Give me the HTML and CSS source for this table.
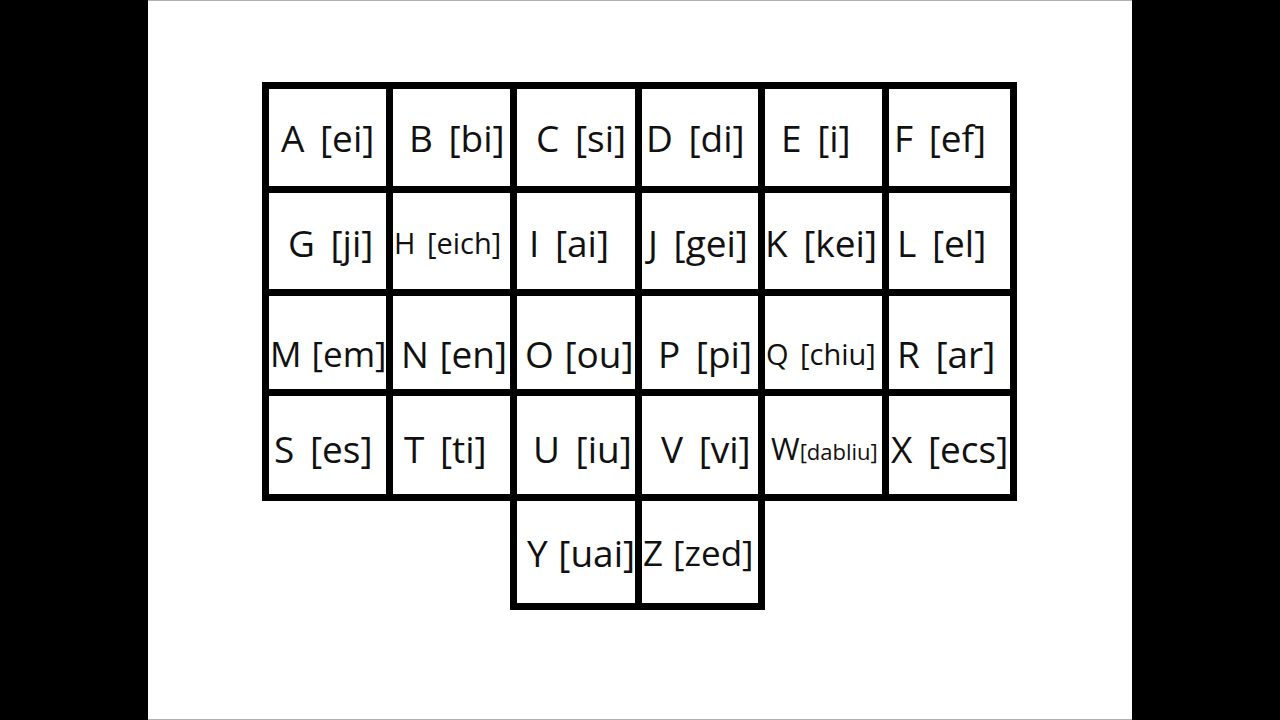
FILE: index.html
```html
<!DOCTYPE html>
<html>
<head>
<meta charset="utf-8">
<link rel="stylesheet" href="styles.css">
</head>
<body>
<div class="slide">
  <div class="chart">
    <div class="grid">
      <div class="cell r1 p12">A [ei]</div>
      <div class="cell r1 p16">B [bi]</div>
      <div class="cell r1 p19">C [si]</div>
      <div class="cell r1 p4">D [di]</div>
      <div class="cell r1 p16">E [i]</div>
      <div class="cell r1 p5">F [ef]</div>

      <div class="cell r2 p19">G [ji]</div>
      <div class="cell r2 p1 small">H [eich]</div>
      <div class="cell r2 p12">I [ai]</div>
      <div class="cell r2 p6">J [gei]</div>
      <div class="cell r2 p0">K [kei]</div>
      <div class="cell r2 p8">L [el]</div>

      <div class="cell r3 p1 tight fit">M [em]</div>
      <div class="cell r3 p8 tight">N [en]</div>
      <div class="cell r3 p8 tight">O [ou]</div>
      <div class="cell r3 p16">P [pi]</div>
      <div class="cell r3 p1 small">Q [chiu]</div>
      <div class="cell r3 p8">R [ar]</div>

      <div class="cell r4 p5">S [es]</div>
      <div class="cell r4 p11">T [ti]</div>
      <div class="cell r4 p16">U [iu]</div>
      <div class="cell r4 p19">V [vi]</div>
      <div class="cell r4 p6 w-cell">W<span class="tiny">[dabliu]</span></div>
      <div class="cell r4 p2">X [ecs]</div>
    </div>
    <div class="tail">
      <div class="cell r5 p10 tight">Y [uai]</div>
      <div class="cell r5 p1 tight fit">Z [zed]</div>
    </div>
  </div>
</div>
</body>
</html>
```
FILE: styles.css
```css
html, body {
  margin: 0;
  padding: 0;
  background: #000;
}

body {
  display: flex;
  justify-content: center;
  height: 720px;
  overflow: hidden;
}

.slide {
  width: 984px;
  height: 720px;
  background: #fff;
  box-sizing: border-box;
  border-top: 1px solid #b0b0b0;
  border-bottom: 1px solid #b0b0b0;
}

.chart {
  margin-top: 81px;
  margin-left: 114px;
  font-family: "Open Sans", "Noto Sans", sans-serif;
  color: #111;
}

.grid {
  display: grid;
  grid-template-columns: 117px 117px 118px 116px 117px 121px;
  grid-template-rows: 97px 96px 93px 98px;
  gap: 7px;
  padding: 7px;
  background: #000;
  width: fit-content;
}

.tail {
  display: grid;
  grid-template-columns: 118px 116px;
  grid-template-rows: 102px;
  gap: 7px;
  padding: 0 7px 7px 7px;
  margin-left: 248px;
  background: #000;
  width: fit-content;
}

.cell {
  background: #fff;
  display: flex;
  align-items: center;
  overflow: hidden;
  white-space: nowrap;
  font-size: 37px;
  word-spacing: 6px;
  box-sizing: border-box;
}

.cell.tight {
  word-spacing: 1px;
}

.cell.fit {
  font-size: 35px;
}

.cell.small {
  font-size: 29px;
  word-spacing: 4px;
}

.w-cell {
  font-size: 31px;
}

.tiny {
  font-size: 22px;
  padding-top: 5px;
}

.r1 { padding-top: 0; }
.r2 { padding-top: 2px; }
.r3 { padding-top: 22px; }
.r4 { padding-top: 6px; }
.r5 { padding-top: 0; }

.p0 { padding-left: 0; }
.p1 { padding-left: 1px; }
.p2 { padding-left: 2px; }
.p4 { padding-left: 4px; }
.p5 { padding-left: 5px; }
.p6 { padding-left: 6px; }
.p8 { padding-left: 8px; }
.p10 { padding-left: 10px; }
.p11 { padding-left: 11px; }
.p12 { padding-left: 12px; }
.p16 { padding-left: 16px; }
.p19 { padding-left: 19px; }
```
